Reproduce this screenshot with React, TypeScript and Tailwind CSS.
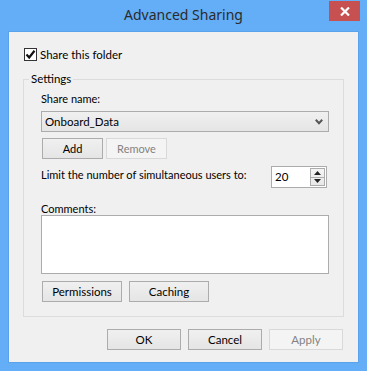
import React from "react";

const btn =
  "h-[21px] border border-[#acacac] bg-gradient-to-b from-[#f0f0f0] to-[#e5e5e5] text-black flex items-center justify-center";
const btnDisabled =
  "h-[21px] border border-[#d9d9d9] bg-[#f4f4f4] text-[#838383] flex items-center justify-center";

export default function App() {
  return (
    <div className="w-[367px] h-[371px] bg-[#63aef6] flex flex-col font-['Lato',sans-serif] text-[11px] text-black leading-[16px]">
      <div className="relative h-[31px] flex items-center justify-center">
        <span className="font-['Noto_Sans',sans-serif] text-[14px] text-[#2b2b2b] -mt-[1px]">Advanced Sharing</span>
        <button className="absolute right-[7px] top-[1px] w-[31px] h-[20px] bg-[#c75050] flex items-center justify-center">
          <svg width="10" height="9" viewBox="0 0 10 9">
            <path d="M1 0.5 L9 8.5 M9 0.5 L1 8.5" stroke="white" strokeWidth="2.2" />
          </svg>
        </button>
      </div>

      <div className="mx-[8px] mb-[8px] flex-1 bg-[#f0f0f0] border border-[#5aa3ea] flex flex-col px-[14px] pt-[16px]">
        <label className="flex items-center h-[13px] ml-[1px] gap-[3px]">
          <span className="w-[13px] h-[13px] border border-[#333] bg-white flex items-center justify-center">
            <svg width="11" height="11" viewBox="0 0 11 11">
              <path d="M1.5 5.5 L4.2 8.5 L9.5 1.8" stroke="#111" strokeWidth="2.2" fill="none" />
            </svg>
          </span>
          <span className="text-[11.5px]">Share this folder</span>
        </label>

        <fieldset className="mt-[10px] border border-[#dcdcdc] pl-[5px] pr-[5px] pb-[14px]">
          <legend className="px-[2px] leading-[16px] text-[11.5px]">Settings</legend>
          <div className="pl-[12px] pr-[9px] flex flex-col">
            <div className="mt-[4px]">Share name:</div>
            <div className="mt-[4px] h-[21px] border border-[#acacac] bg-gradient-to-b from-[#f0f0f0] to-[#e5e5e5] flex items-center justify-between pl-[3px] pr-[5px]">
              <span className="text-[11.5px]">Onboard_Data</span>
              <svg width="8" height="6" viewBox="0 0 8 6">
                <path d="M0.8 0.8 L4 4.2 L7.2 0.8" stroke="#555" strokeWidth="2" fill="none" />
              </svg>
            </div>
            <div className="mt-[6px] flex gap-[3px] ml-[1px]">
              <button className={`${btn} w-[61px]`}>Add</button>
              <button className={`${btnDisabled} w-[61px]`}>Remove</button>
            </div>
            <div className="mt-[7px] flex items-center justify-between">
              <span className="-mt-[4px]">Limit the number of simultaneous users to:</span>
              <div className="mr-[2px] w-[56px] h-[22px] border border-[#acacac] bg-white flex items-center justify-between pl-[3px] pr-[1px]">
                <span className="text-[11.5px]">20</span>
                <div className="w-[15px] h-[18px] border border-[#acacac] bg-gradient-to-b from-[#f4f4f4] to-[#e8e8e8] flex flex-col">
                  <div className="flex-1 flex items-center justify-center border-b border-[#acacac]">
                    <svg width="7" height="4" viewBox="0 0 7 4">
                      <path d="M0 4 L3.5 0 L7 4 Z" fill="#222" />
                    </svg>
                  </div>
                  <div className="flex-1 flex items-center justify-center">
                    <svg width="7" height="4" viewBox="0 0 7 4">
                      <path d="M0 0 L3.5 4 L7 0 Z" fill="#222" />
                    </svg>
                  </div>
                </div>
              </div>
            </div>
            <div className="mt-[14px] leading-[13px]">Comments:</div>
            <textarea className="h-[59px] border border-[#acacac] bg-white resize-none outline-none" />
            <div className="mt-[7px] flex gap-[7px] ml-[1px]">
              <button className={`${btn} w-[80px] border-[#3399ff] text-[11.5px]`}>Permissions</button>
              <button className={`${btn} w-[80px] text-[11.5px]`}>Caching</button>
            </div>
          </div>
        </fieldset>

        <div className="mt-[12px] mr-[1px] flex justify-end gap-[7px] text-[11.5px]">
          <button className={`${btn} w-[74px]`}>OK</button>
          <button className={`${btn} w-[74px]`}>Cancel</button>
          <button className={`${btnDisabled} w-[74px]`}>Apply</button>
        </div>
      </div>
    </div>
  );
}
